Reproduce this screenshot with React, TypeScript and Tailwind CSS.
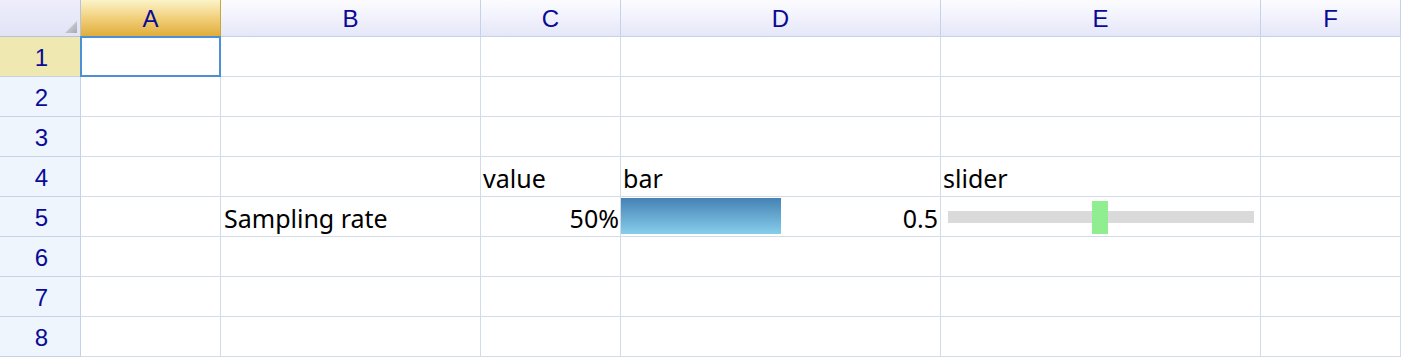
import React from "react";

const cols = ["A", "B", "C", "D", "E", "F"];
const widths = [140, 260, 140, 320, 320, 140];

function Corner() {
  return (
    <div className="relative h-[37px] w-[81px] border-r border-b border-[#b5c4dd] bg-gradient-to-b from-[#ededfb] to-[#e2e4f6]">
      <svg className="absolute right-[3px] bottom-[3px]" width="12" height="12" viewBox="0 0 12 12">
        <defs>
          <linearGradient id="tri" x1="0" y1="0" x2="1" y2="1">
            <stop offset="0" stopColor="#e0e0e8" />
            <stop offset="1" stopColor="#a8a8b0" />
          </linearGradient>
        </defs>
        <polygon points="12,0 12,12 0,12" fill="url(#tri)" />
      </svg>
    </div>
  );
}

function ColHeader({ label, width, selected }: { label: string; width: number; selected: boolean }) {
  return (
    <div
      style={{ width }}
      className={
        "flex h-[37px] items-center justify-center border-r border-b text-[24px] text-[#0a0a96] " +
        (selected
          ? "border-[#c9a53e] bg-gradient-to-b from-[#fbf3c8] via-[#f1d07a] to-[#e1ad37]"
          : "border-[#c5d2e8] bg-gradient-to-b from-[#fcfcff] to-[#e5e7f8]")
      }
    >
      <span className="pt-px font-['Liberation_Sans',Arial,sans-serif] leading-none">{label}</span>
    </div>
  );
}

function RowHeader({ n }: { n: number }) {
  return (
    <div
      className={
        "flex h-[40px] w-[81px] items-center justify-center border-r border-b border-[#c5d2e8] pl-[3px] text-[24px] text-[#0a0a96] " +
        (n === 1 ? "bg-[#efe8b0]" : "bg-[#eef5fd]")
      }
    >
      <span className="pt-[2px] font-['Liberation_Sans',Arial,sans-serif] leading-none">{n}</span>
    </div>
  );
}

function Cell({ width, children, className = "" }: { width: number; children?: React.ReactNode; className?: string }) {
  return (
    <div
      style={{ width }}
      className={"relative h-[40px] border-r border-b border-[#d3dae8] bg-white " + className}
    >
      {children}
    </div>
  );
}

const txt = "font-['Noto_Sans','Open_Sans',sans-serif] text-[25px] leading-none text-black whitespace-nowrap";

export default function App() {
  const rows = [1, 2, 3, 4, 5, 6, 7, 8];
  return (
    <div className="h-[358px] w-[1402px] overflow-hidden bg-white">
      <div className="flex">
        <Corner />
        {cols.map((c, i) => (
          <ColHeader key={c} label={c} width={widths[i]} selected={i === 0} />
        ))}
      </div>
      {rows.map((r) => (
        <div key={r} className="flex">
          <RowHeader n={r} />
          {cols.map((c, i) => {
            const w = widths[i];
            let content: React.ReactNode = null;
            if (r === 4 && c === "C") content = <div className={"flex h-full items-end px-[2px] pb-[5px] " + txt}>value</div>;
            if (r === 4 && c === "D") content = <div className={"flex h-full items-end px-[2px] pb-[5px] " + txt}>bar</div>;
            if (r === 4 && c === "E") content = <div className={"flex h-full items-end px-[2px] pb-[5px] " + txt}>slider</div>;
            if (r === 5 && c === "B") content = <div className={"flex h-full items-end px-[3px] pb-[5px] " + txt}>Sampling rate</div>;
            if (r === 5 && c === "C") content = <div className={"flex h-full items-end justify-end pr-[1px] pb-[5px] " + txt}>50%</div>;
            if (r === 5 && c === "D")
              content = (
                <div className="flex h-full items-stretch pt-px pb-[2px]">
                  <div style={{ width: "50%" }} className="bg-gradient-to-b from-[#4682b4] to-[#87ceeb]" />
                  <div className={"flex flex-1 items-end justify-end pr-[2px] pb-[3px] " + txt}>0.5</div>
                </div>
              );
            if (r === 5 && c === "E")
              content = (
                <div className="flex h-full items-center pl-[7px] pr-[6px]">
                  <div className="relative h-[12px] w-[306px] bg-[#dadada]">
                    <div className="absolute left-[144px] top-[-10px] h-[33px] w-[16px] bg-[#90ee90]" />
                  </div>
                </div>
              );
            return (
              <Cell key={c} width={w}>
                {content}
                {r === 1 && c === "A" && (
                  <div className="absolute inset-[-1px] left-[-1px] border-2 border-[#4a90d9]" />
                )}
              </Cell>
            );
          })}
        </div>
      ))}
    </div>
  );
}
